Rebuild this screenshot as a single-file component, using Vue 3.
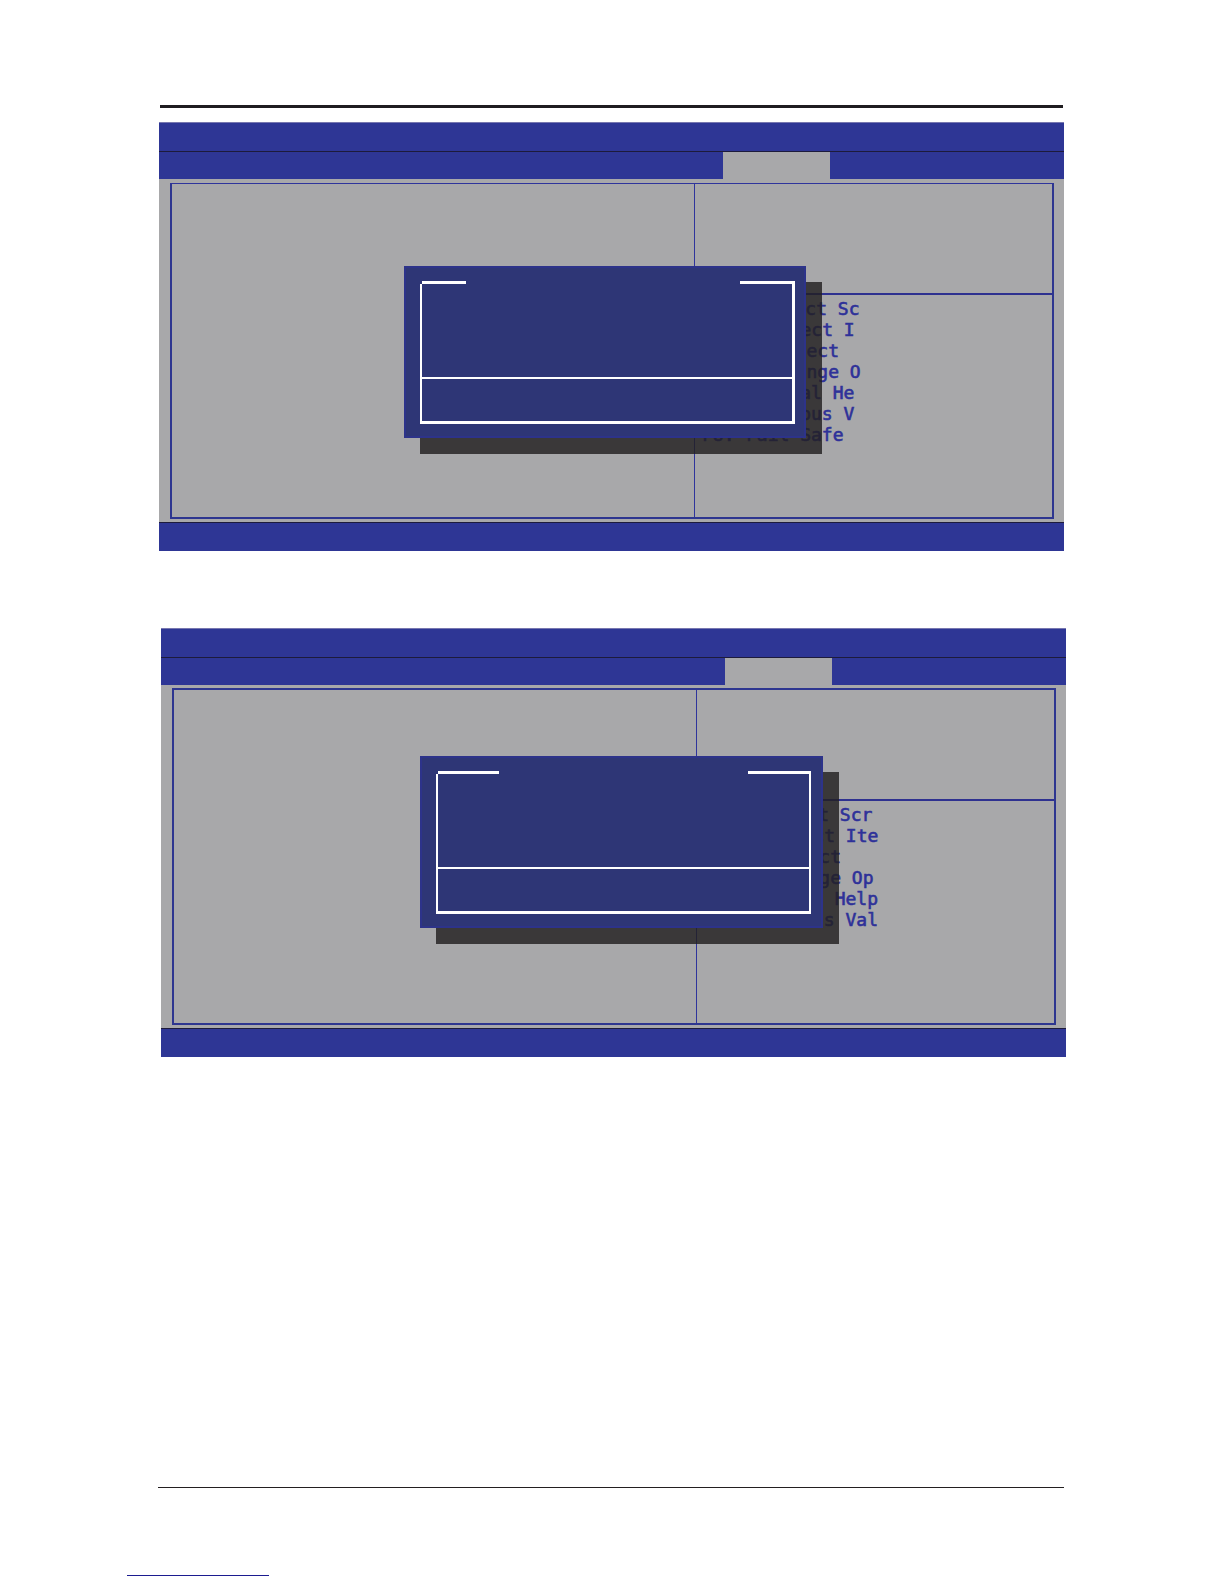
<template>
  <main class="page">
    <div class="header-rule"></div>

    <section
      v-for="screen in screens"
      :key="screen.id"
      class="screen"
      :class="screen.id"
    >
      <header class="title-bar"></header>

      <nav class="menu-bar">
        <div class="menu-left"></div>
        <div class="menu-tab"></div>
        <div class="menu-right"></div>
      </nav>

      <div class="body">
        <div class="frame">
          <div class="settings"></div>
          <aside class="side">
            <div class="hint"></div>
            <ul class="keys">
              <li v-for="row in screen.keys" :key="row.key">
                <span class="key" :class="row.type">{{ row.key }}</span>
                <span>{{ row.label }}</span>
              </li>
            </ul>
          </aside>
        </div>
      </div>

      <footer class="status-bar"></footer>

      <div class="dialog" role="dialog">
        <div class="dialog-top">
          <span class="line-left"></span>
          <span class="line-right"></span>
        </div>
        <div class="dialog-message"></div>
        <div class="dialog-actions"></div>
      </div>
    </section>

    <footer class="page-footer">
      <div class="footer-rule"></div>
      <div class="link-rule"></div>
    </footer>
  </main>
</template>

<script setup>
const screens = [
  {
    id: 'first',
    keys: [
      { key: '→←:', type: 'across', label: 'Select Sc' },
      { key: '↑↓:', type: 'updown', label: 'Select I' },
      { key: 'Enter:', type: 'action', label: 'Select' },
      { key: '+/-:', type: 'action', label: 'Change O' },
      { key: 'F1:', type: 'fn', label: 'General He' },
      { key: 'F2:', type: 'fn', label: 'Previous V' },
      { key: 'F8:', type: 'fn', label: 'Fail Safe' }
    ]
  },
  {
    id: 'second',
    keys: [
      { key: '→←:', type: 'across', label: 'Select Scr' },
      { key: '↑↓:', type: 'updown', label: 'Select Ite' },
      { key: 'Enter:', type: 'action', label: 'Select' },
      { key: '+/-:', type: 'action', label: 'Change Op' },
      { key: 'F1:', type: 'fn', label: 'General Help' },
      { key: 'F2:', type: 'fn', label: 'Previous Val' }
    ]
  }
]
</script>

<style>
body {
  margin: 0;
  background: #fff;
}
</style>

<style scoped>
.page {
  box-sizing: border-box;
  display: flex;
  flex-direction: column;
  min-height: 100vh;
  padding: 105px 160px 8px 158px;
}

.header-rule {
  height: 3px;
  margin: 0 1px 14px 2px;
  background: #1f1d20;
}

.screen {
  position: relative;
  background: #a8a8aa;
}

.first {
  margin-left: 1px;
}

.second {
  margin: 77px -2px 0 3px;
}

.title-bar {
  height: 28px;
  border-top: 1px solid #7777b0;
  border-bottom: 1px solid #1d1b3c;
  background: #2e3695;
}

.menu-bar {
  display: flex;
  height: 27px;
}

.menu-left {
  flex: 564;
  background: #2e3695;
}

.menu-tab {
  flex: 107;
}

.menu-right {
  flex: 234;
  background: #2e3695;
}

.body {
  display: flex;
  box-sizing: border-box;
  min-height: 343px;
  padding: 4px 10px 3px 11px;
}

.second .body {
  padding-top: 3px;
}

.frame {
  flex: 1;
  display: grid;
  grid-template-columns: 522fr 358fr;
  border: 2px solid #2e3690;
}

.first .frame {
  border-top: 1px solid #2f349c;
}

.side {
  border-left: 1px solid #2f349c;
}

.hint {
  height: 109px;
  border-bottom: 2px solid #2e3190;
}

.keys {
  margin: 0;
  padding: 3px 0 0 7px;
  list-style: none;
  font-family: 'DejaVu Sans Mono', 'Liberation Mono', monospace;
  font-size: 18px;
  line-height: 21px;
  color: #2e3199;
  -webkit-text-stroke: 0.6px #2e3199;
}

.keys li {
  display: flex;
  white-space: pre;
}

.key {
  flex: none;
}

.across {
  width: 60px;
}

.updown {
  width: 66px;
}

.action {
  width: 72px;
}

.fn {
  width: 44px;
}

.status-bar {
  height: 28px;
  border-top: 1px solid #1d1b3c;
  background: #2e3695;
}

/* popup over the setup screen, with its hard drop shadow */
.dialog {
  position: absolute;
  top: 144px;
  left: 245px;
  right: 258px;
  display: flex;
  flex-direction: column;
  box-sizing: border-box;
  height: 172px;
  padding: 15px 11px 14px 16px;
  background: #2e3676;
  box-shadow: inset 0 0 0 2px #2d338a, 16px 16px 0 0 rgba(34, 32, 32, 0.82);
}

.second .dialog {
  top: 128px;
  left: 259px;
  right: 243px;
  padding-right: 12px;
}

.dialog-top {
  display: flex;
  justify-content: space-between;
  height: 3px;
}

.line-left {
  width: 44px;
  margin-left: 2px;
  background: #fff;
}

.line-right {
  width: 55px;
  background: #fff;
}

.second .line-left {
  width: 61px;
}

.second .line-right {
  width: 63px;
}

.dialog-message,
.dialog-actions {
  border: solid #fff;
  border-width: 0 3px 2px 2px;
}

.dialog-message {
  flex: 1;
}

.dialog-actions {
  height: 42px;
  border-bottom-width: 3px;
}

.second .dialog-message,
.second .dialog-actions {
  border-right-width: 2px;
}

.page-footer {
  margin-top: auto;
}

.footer-rule {
  height: 1px;
  margin-bottom: 87px;
  background: #231f20;
}

.link-rule {
  width: 142px;
  height: 1px;
  margin-left: -31px;
  background: #1c1c90;
}
</style>
